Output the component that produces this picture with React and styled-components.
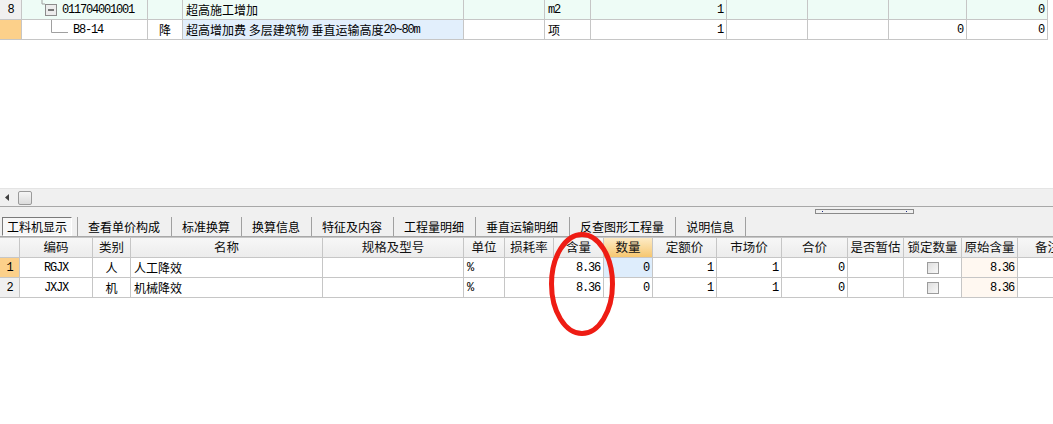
import React from "react";
import styled, { createGlobalStyle } from "styled-components";

const GlobalStyle = createGlobalStyle`
  body {
    margin: 0;
    background: #fff;
    font-family: "Noto Sans CJK SC", "Liberation Sans", sans-serif;
    font-size: 12px;
    color: #000;
  }
`;

const Page = styled.div`
  position: relative;
  width: 1053px;
  height: 424px;
  overflow: hidden;
  display: flex;
  flex-direction: column;
`;

const Grid = styled.div`
  display: grid;
  grid-template-columns: ${p => p.cols};
  width: max-content;
`;

const Cell = styled.div`
  box-sizing: border-box;
  height: ${p => p.h || 20}px;
  display: flex;
  align-items: center;
  justify-content: ${p => p.align || "flex-start"};
  padding: 0 ${p => (p.align === "center" ? 0 : 3)}px;
  border-right: 1px solid #c6c6c6;
  border-bottom: 1px solid #c6c6c6;
  background: ${p => p.bg || "#fff"};
  white-space: nowrap;
  overflow: hidden;
  line-height: 1;
`;

const HeadCell = styled(Cell)`
  justify-content: center;
  padding: 0;
  border-top: 1px solid #c6c6c6;
  background: ${p =>
    p.active
      ? "linear-gradient(#fdebc6, #f6c770)"
      : "linear-gradient(#f7f7f7, #ececec)"};
  font-size: 12.5px;
  color: #111;
`;

const Mono = styled.span`
  font-family: "Liberation Mono", monospace;
  font-size: 12px;
  letter-spacing: -1.2px;
`;

const TreeCell = styled(Cell)`
  padding: 0;
  gap: 2px;
`;

const Gap = styled.div`
  flex: 0 0 148px;
`;

const HScroll = styled.div`
  height: 17px;
  background: #f0f0f0;
  border-top: 1px solid #e4e4e4;
  display: flex;
  align-items: center;
  gap: 9px;
  padding-left: 5px;
`;

const Thumb = styled.div`
  width: 14px;
  height: 14px;
  box-sizing: border-box;
  border: 1px solid #9a9a9a;
  border-radius: 2px;
  background: linear-gradient(#f6f6f6, #dcdcdc);
`;

const TabBar = styled.div`
  height: 31px;
  box-sizing: border-box;
  background: #f0f0f0;
  border-top: 1px solid #a8a8a8;
  border-bottom: 1px solid #a8a8a8;
  display: flex;
  flex-direction: column;
`;

const GripRow = styled.div`
  height: 9px;
  display: flex;
  align-items: center;
  padding-left: 815px;
`;

const Grip = styled.div`
  width: 99px;
  height: 5px;
  box-sizing: border-box;
  border: 1px solid #8a8a8a;
  display: flex;
  justify-content: space-between;
  align-items: center;
  padding: 0 6px;

  &::before,
  &::after {
    content: "";
    width: 1px;
    height: 1px;
    background: #1a2a80;
  }
`;

const Tabs = styled.div`
  display: flex;
  align-items: center;
  height: 20px;
  padding-left: 2px;
`;

const Tab = styled.div`
  height: 19px;
  box-sizing: border-box;
  display: flex;
  align-items: center;
  flex: none;
  font-size: 12px;
  padding: ${p => (p.selected ? "0 4px" : "0 11px 0 10px")};
  margin-right: ${p => (p.selected ? 5 : 0)}px;
  border: ${p => (p.selected ? "1px solid" : "0")};
  border-color: #7a7a7a #ffffff #ffffff #7a7a7a;
  background: ${p => (p.selected ? "#f7f7f7" : "transparent")};
`;

const Sep = styled.div`
  flex: none;
  width: 1px;
  height: 19px;
  background: #a0a0a0;
`;

const Box = styled.span`
  width: 12px;
  height: 12px;
  box-sizing: border-box;
  border: 1px solid #9c9c9c;
  background: linear-gradient(135deg, #dedede, #f8f8f8);
`;

const Overlay = styled.svg`
  position: absolute;
  left: 0;
  top: 0;
  pointer-events: none;
`;

const topCols = "22px 126px 35px 281px 81px 46px 136px 81px 81px 78px 81px";
const bottomCols =
  "20px 73px 38px 192px 141px 41px 49px 50px 49px 64px 65px 66px 56px 58px 56px 60px";

const ORANGE = "#fcd08a";
const GREY = "#f0f0f0";
const MINT = "#eefcf6";

const tabs = [
  "工料机显示",
  "查看单价构成",
  "标准换算",
  "换算信息",
  "特征及内容",
  "工程量明细",
  "垂直运输明细",
  "反查图形工程量",
  "说明信息"
];

const heads = [
  "",
  "编码",
  "类别",
  "名称",
  "规格及型号",
  "单位",
  "损耗率",
  "含量",
  "数量",
  "定额价",
  "市场价",
  "合价",
  "是否暂估",
  "锁定数量",
  "原始含量",
  "备注"
];

const items = [
  { no: "1", code: "RGJX", kind: "人", name: "人工降效", sel: true },
  { no: "2", code: "JXJX", kind: "机", name: "机械降效", sel: false }
];

function Collapse() {
  return (
    <svg width="38" height="19">
      <path d="M20 0V4H23" stroke="#a0a0a0" fill="none" />
      <rect x="23.5" y="4.5" width="11" height="11" fill="#ececec" stroke="#8c8c8c" />
      <path d="M26 10H32" stroke="#000" strokeWidth="1" />
    </svg>
  );
}

function Branch() {
  return (
    <svg width="49" height="19">
      <path d="M29.5 0V12.5H46" stroke="#a0a0a0" fill="none" />
    </svg>
  );
}

export default function App() {
  return (
    <Page>
      <GlobalStyle />
      <Grid cols={topCols}>
        <Cell bg={GREY} align="center"><Mono>8</Mono></Cell>
        <TreeCell bg={MINT}><Collapse /><Mono>011704001001</Mono></TreeCell>
        <Cell bg={MINT} />
        <Cell bg={MINT}>超高施工增加</Cell>
        <Cell bg={MINT} />
        <Cell bg={MINT}><Mono>m2</Mono></Cell>
        <Cell bg={MINT} align="flex-end"><Mono>1</Mono></Cell>
        <Cell bg={MINT} />
        <Cell bg={MINT} />
        <Cell bg={MINT} />
        <Cell bg={MINT} align="flex-end"><Mono>0</Mono></Cell>

        <Cell bg={ORANGE} />
        <TreeCell><Branch /><Mono>B8-14</Mono></TreeCell>
        <Cell align="center">降</Cell>
        <Cell bg="#e2effc">超高增加费&nbsp;多层建筑物&nbsp;垂直运输高度<Mono>20~80m</Mono></Cell>
        <Cell />
        <Cell>项</Cell>
        <Cell align="flex-end"><Mono>1</Mono></Cell>
        <Cell />
        <Cell />
        <Cell align="flex-end"><Mono>0</Mono></Cell>
        <Cell align="flex-end"><Mono>0</Mono></Cell>
      </Grid>

      <Gap />

      <HScroll>
        <svg width="4" height="7"><path d="M4 0V7L0 3.5Z" fill="#404040" /></svg>
        <Thumb />
      </HScroll>

      <TabBar>
        <GripRow><Grip /></GripRow>
        <Tabs>
          <Tab selected>{tabs[0]}</Tab>
          <Sep />
          {tabs.slice(1).map(t => (
            <React.Fragment key={t}>
              <Tab>{t}</Tab>
              <Sep />
            </React.Fragment>
          ))}
        </Tabs>
      </TabBar>

      <Grid cols={bottomCols}>
        {heads.map((h, i) => (
          <HeadCell key={i} h={21} active={h === "数量"}>{h}</HeadCell>
        ))}
        {items.map(r => (
          <React.Fragment key={r.no}>
            <Cell bg={r.sel ? ORANGE : GREY} align="center"><Mono>{r.no}</Mono></Cell>
            <Cell align="center"><Mono>{r.code}</Mono></Cell>
            <Cell align="center">{r.kind}</Cell>
            <Cell>{r.name}</Cell>
            <Cell />
            <Cell><Mono>%</Mono></Cell>
            <Cell />
            <Cell align="flex-end"><Mono>8.36</Mono></Cell>
            <Cell align="flex-end" bg={r.sel ? "#deedfc" : "#fff"}><Mono>0</Mono></Cell>
            <Cell align="flex-end"><Mono>1</Mono></Cell>
            <Cell align="flex-end"><Mono>1</Mono></Cell>
            <Cell align="flex-end"><Mono>0</Mono></Cell>
            <Cell />
            <Cell align="center"><Box /></Cell>
            <Cell align="flex-end" bg="#fff8f1"><Mono>8.36</Mono></Cell>
            <Cell />
          </React.Fragment>
        ))}
      </Grid>

      <Overlay width="1053" height="424">
        <ellipse cx="582" cy="284" rx="30.5" ry="49.5" fill="none" stroke="#ee1c14" strokeWidth="5" />
      </Overlay>
    </Page>
  );
}
